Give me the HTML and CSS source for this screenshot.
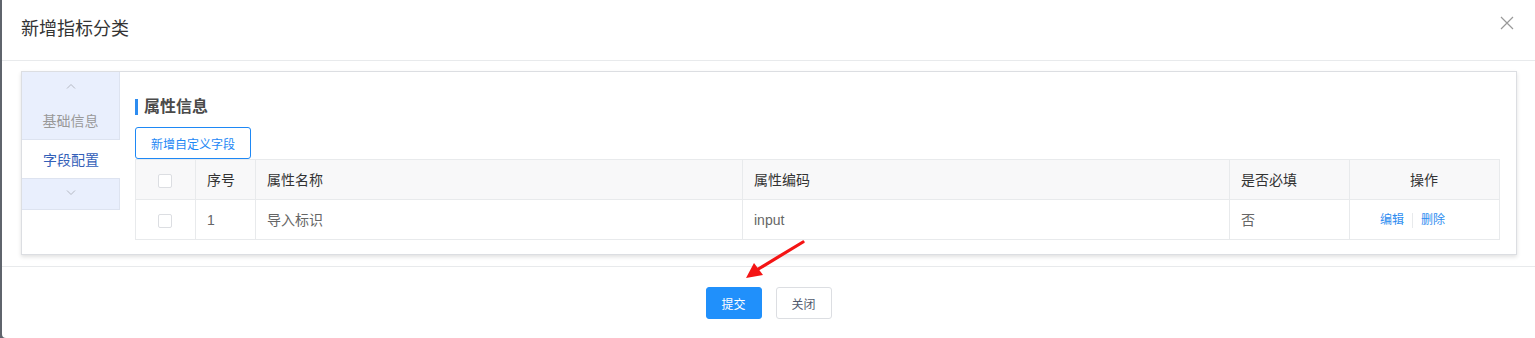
FILE: index.html
```html
<!DOCTYPE html>
<html lang="zh-CN">
<head>
    <meta charset="UTF-8">
    <meta name="viewport" content="width=device-width, initial-scale=1.0">
    <title>新增指标分类</title>
    <link rel="stylesheet" href="styles.css">
</head>
<body>
<div class="overlay">
    <div class="modal">
        <div class="modal-header">
            <span class="modal-title">新增指标分类</span>
            <span class="modal-close">
                <svg width="14" height="14" viewBox="0 0 14 14"><path d="M1 1L13 13M13 1L1 13" stroke="#999" stroke-width="1.2" fill="none"/></svg>
            </span>
        </div>
        <div class="modal-body">
            <div class="panel">
                <div class="side-tabs">
                    <div class="tab-arrow">
                        <svg width="10" height="6" viewBox="0 0 10 6"><path d="M1 5.5L5 1.5L9 5.5" stroke="#b4b8c2" stroke-width="1" fill="none"/></svg>
                    </div>
                    <div class="tab">基础信息</div>
                    <div class="tab active">字段配置</div>
                    <div class="tab-arrow down">
                        <svg width="10" height="6" viewBox="0 0 10 6"><path d="M1 0.5L5 4.5L9 0.5" stroke="#b4b8c2" stroke-width="1" fill="none"/></svg>
                    </div>
                </div>
                <div class="panel-main">
                    <div class="section-title">属性信息</div>
                    <button class="btn-outline">新增自定义字段</button>
                    <table class="field-table">
                        <colgroup>
                            <col style="width:60px">
                            <col style="width:60px">
                            <col>
                            <col>
                            <col style="width:120px">
                            <col style="width:150px">
                        </colgroup>
                        <thead>
                            <tr>
                                <th class="cell-check"><span class="checkbox"></span></th>
                                <th>序号</th>
                                <th>属性名称</th>
                                <th>属性编码</th>
                                <th>是否必填</th>
                                <th class="cell-center">操作</th>
                            </tr>
                        </thead>
                        <tbody>
                            <tr>
                                <td class="cell-check"><span class="checkbox"></span></td>
                                <td>1</td>
                                <td>导入标识</td>
                                <td>input</td>
                                <td>否</td>
                                <td class="cell-actions">
                                    <a href="#" class="link">编辑</a><span class="divider"></span><a href="#" class="link">删除</a>
                                </td>
                            </tr>
                        </tbody>
                    </table>
                </div>
            </div>
        </div>
        <div class="modal-footer">
            <button class="btn btn-primary">提交</button>
            <button class="btn btn-default">关闭</button>
        </div>
    </div>
    <svg class="mark-arrow" width="70" height="50" viewBox="0 0 70 50">
        <path d="M62 4L14 33" stroke="#f41414" stroke-width="3.2" stroke-linecap="round" fill="none"/>
        <path d="M5 40L13 25L22 37Z" fill="#f41414"/>
    </svg>
</div>
</body>
</html>
```

FILE: styles.css
```css
* {
    box-sizing: border-box;
}

body {
    margin: 0;
    font-family: "Liberation Sans", "Noto Sans CJK SC", sans-serif;
    color: #333;
}

.overlay {
    position: relative;
    background-color: #5f646c;
    height: 338px;
    overflow: hidden;
}

.modal {
    margin-left: 2px;
    height: 338px;
    background-color: #fff;
    border-radius: 0 0 0 4px;
}

.modal-header {
    height: 61px;
    border-bottom: 1px solid #e8eaec;
    display: flex;
    align-items: center;
    justify-content: space-between;
    padding: 0 21px 3px 19px;
}

.modal-title {
    font-size: 18px;
    line-height: 24px;
    color: #333;
}

.modal-close {
    display: flex;
    margin-bottom: 12px;
}

.modal-body {
    padding: 10px 18px 11px 19px;
}

.panel {
    display: flex;
    border: 1px solid #dcdee2;
    box-shadow: 0 2px 4px rgba(0, 0, 0, 0.12);
    height: 184px;
}

.side-tabs {
    width: 98px;
    flex-shrink: 0;
    display: flex;
    flex-direction: column;
}

.tab-arrow {
    height: 30px;
    background-color: #e9effd;
    border-right: 1px solid #dde3f0;
    display: flex;
    align-items: center;
    justify-content: center;
    padding-bottom: 3px;
}

.tab-arrow.down {
    height: 32px;
    border-top: 1px solid #dde3f0;
    border-bottom: 1px solid #dde3f0;
    padding-bottom: 2px;
}

.tab {
    height: 38px;
    font-size: 14px;
    line-height: 20px;
    text-align: center;
    padding-top: 9px;
    color: #999;
    background-color: #e9effd;
    border-right: 1px solid #dde3f0;
    border-bottom: 1px solid #dde3f0;
}

.tab.active {
    background-color: #fff;
    border-right: none;
    border-bottom: none;
    color: #3360b8;
    height: 38px;
    padding-top: 10px;
}

.panel-main {
    flex: 1;
    padding: 27px 16px 15px 15px;
}

.section-title {
    font-size: 16px;
    line-height: 16px;
    font-weight: bold;
    color: #4a4a4a;
    border-left: 3px solid #2d8cf0;
    padding-left: 6px;
    margin-bottom: 12px;
}

.btn-outline {
    display: block;
    height: 32px;
    width: 116px;
    padding: 0;
    font-family: inherit;
    font-size: 12px;
    color: #1e88f5;
    background-color: #fff;
    border: 1px solid #1e88f5;
    border-radius: 3px;
}

.field-table {
    width: 100%;
    border-collapse: collapse;
    table-layout: fixed;
}

.field-table th,
.field-table td {
    height: 40px;
    border: 1px solid #e8eaec;
    padding: 0 12px 0 11px;
    text-align: left;
    font-size: 14px;
    line-height: 20px;
}

.field-table th {
    background-color: #f8f8f9;
    font-weight: normal;
    color: #333;
}

.field-table td {
    color: #666;
}

.field-table .cell-check {
    text-align: center;
    padding: 0 2px 0 0;
}

.field-table .cell-center {
    text-align: center;
}

.field-table .cell-actions {
    text-align: center;
    padding: 0 24px 0 0;
}

.checkbox {
    display: inline-block;
    width: 14px;
    height: 14px;
    border: 1px solid #dcdee2;
    border-radius: 2px;
    background-color: #fff;
    vertical-align: middle;
}

.link {
    font-size: 12px;
    color: #2d8cf0;
    text-decoration: none;
    vertical-align: middle;
}

.divider {
    display: inline-block;
    width: 1px;
    height: 15px;
    background-color: #e8eaec;
    margin: 0 8px;
    vertical-align: middle;
}

.modal-footer {
    border-top: 1px solid #e8eaec;
    padding-top: 20px;
    display: flex;
    justify-content: center;
    gap: 14px;
}

.btn {
    width: 56px;
    height: 32px;
    padding: 0;
    font-family: inherit;
    font-size: 12px;
    border-radius: 3px;
}

.btn-primary {
    background-color: #2090fb;
    border: 1px solid #2090fb;
    color: #fff;
}

.btn-default {
    background-color: #fff;
    border: 1px solid #dcdee2;
    color: #515a6e;
}

.mark-arrow {
    position: absolute;
    left: 741px;
    top: 238px;
}
```
